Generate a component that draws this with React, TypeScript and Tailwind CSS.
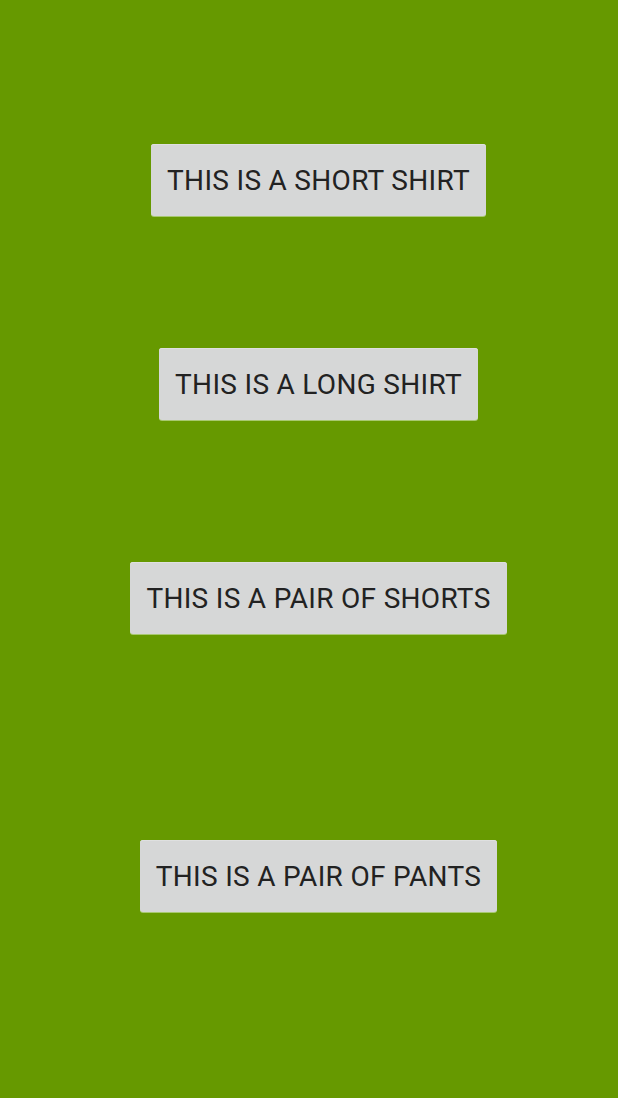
const items = [
  { label: 'THIS IS A SHORT SHIRT', mt: 'mt-[144px]' },
  { label: 'THIS IS A LONG SHIRT', mt: 'mt-[132px]' },
  { label: 'THIS IS A PAIR OF SHORTS', mt: 'mt-[142px]' },
  { label: 'THIS IS A PAIR OF PANTS', mt: 'mt-[206px]' },
]

export default function App() {
  return (
    <div className="w-[618px] h-[1098px] bg-[#669900] pl-[19px] flex flex-col items-center font-['Roboto',sans-serif]">
      {items.map((item) => (
        <button
          key={item.label}
          className={`${item.mt} h-[72px] px-[16px] pt-[2px] rounded-[3px] bg-[#d6d7d7] text-[#222222] text-[28px] leading-none tracking-[0.3px] shadow-[0_1px_0_#a8c870,inset_0_1px_0_#dfe0e0]`}
        >
          {item.label}
        </button>
      ))}
    </div>
  )
}
